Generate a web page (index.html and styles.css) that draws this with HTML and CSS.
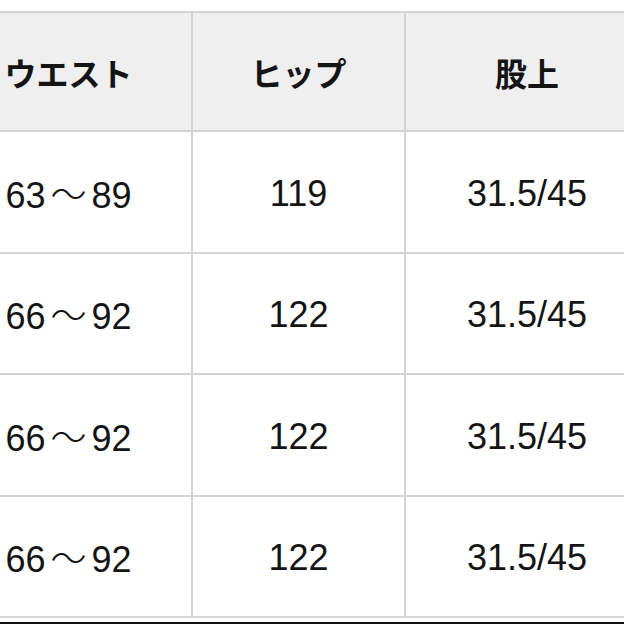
FILE: index.html
```html
<!DOCTYPE html>
<html lang="ja">
<head>
<meta charset="utf-8">
<link rel="stylesheet" href="styles.css">
</head>
<body>
<div class="frame">
  <table class="size-table">
    <colgroup>
      <col class="c1"><col class="c2"><col class="c3">
    </colgroup>
    <thead>
      <tr><th>ウエスト</th><th>ヒップ</th><th>股上</th></tr>
    </thead>
    <tbody>
      <tr><td>63<span class="wave">〜</span>89</td><td>119</td><td>31.5/45</td></tr>
      <tr><td>66<span class="wave">〜</span>92</td><td>122</td><td>31.5/45</td></tr>
      <tr><td>66<span class="wave">〜</span>92</td><td>122</td><td>31.5/45</td></tr>
      <tr><td>66<span class="wave">〜</span>92</td><td>122</td><td>31.5/45</td></tr>
    </tbody>
  </table>
  <div class="edge"></div>
</div>
</body>
</html>
```
FILE: styles.css
```css
html, body {
  margin: 0;
  padding: 0;
  background: #ffffff;
}
.frame {
  position: relative;
  width: 624px;
  height: 624px;
  overflow: hidden;
  padding-top: 11px;
  box-sizing: border-box;
}
.size-table {
  border-collapse: separate;
  border-spacing: 0;
  table-layout: fixed;
  width: 704px;
  margin-left: -54px;
  border-top: 2px solid #d4d4d4;
  color: #141414;
}
.c1 { width: 247px; }
.c2 { width: 213px; }
.c3 { width: 244px; }
.size-table th,
.size-table td {
  box-sizing: border-box;
  padding: 0;
  text-align: center;
  vertical-align: middle;
  border-right: 2px solid #d4d4d4;
  border-bottom: 2px solid #d4d4d4;
}
.size-table th {
  height: 119px;
  background: #efefef;
  font-family: "Noto Sans CJK JP", sans-serif;
  font-weight: 700;
  font-size: 32px;
}
.size-table td {
  height: 121.5px;
  font-family: "Liberation Sans", "Noto Sans CJK JP", sans-serif;
  font-size: 36px;
  line-height: 1;
  padding-top: 4px;
}
.wave {
  font-family: "Noto Sans CJK JP", sans-serif;
  font-weight: 300;
  line-height: 1;
  margin: 0 5px;
}
.edge {
  position: absolute;
  left: 0;
  right: 0;
  bottom: 0;
  height: 2px;
  background: #111111;
}
```
